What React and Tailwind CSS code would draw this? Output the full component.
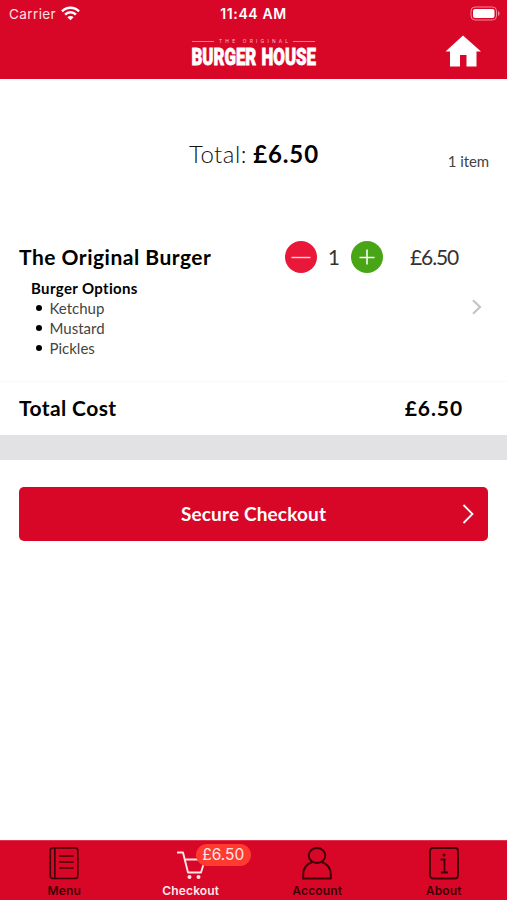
import React from 'react';

const options = ['Ketchup', 'Mustard', 'Pickles'];

const StatusBar = () => (
  <div className="grid h-[27px] grid-cols-3 items-center pl-[9px] pr-[7px] font-['Inter',sans-serif] text-[13.5px] text-white">
    <div className="flex items-center gap-[5px]">
      <span className="pt-px tracking-[0.4px] text-[#ffe0e4]">Carrier</span>
      <svg width="19" height="15" viewBox="0 0 19 15" fill="none" stroke="currentColor" strokeWidth="2.5">
        <path d="M1 5.3a12.1 12.1 0 0 1 17 0" />
        <path d="M4.1 8.6a7.6 7.6 0 0 1 10.8 0" />
        <path d="M9.5 14.3 6.4 11.2a4.4 4.4 0 0 1 6.2 0z" fill="currentColor" stroke="none" />
      </svg>
    </div>
    <span className="-ml-[2px] text-center text-[14px] font-semibold tracking-[0.6px]">11:44 AM</span>
    <svg className="justify-self-end" width="30" height="15" viewBox="0 0 30 15">
      <rect x="1" y="1" width="25.5" height="13" rx="4" fill="none" stroke="#f0899a" />
      <rect x="3" y="3" width="21.5" height="9" rx="2" fill="#fff" />
      <path d="M28 5v5c1-.4 1.6-1.4 1.6-2.5S29 5.4 28 5z" fill="#f0899a" />
    </svg>
  </div>
);

const Logo = () => (
  <svg className="overflow-visible" width="126" height="36" viewBox="0 0 126 36" fill="#fff">
    <path d="M1 3.5h22M102 3.5h22" stroke="#f08c9b" strokeWidth="0.9" />
    <text x="28" y="5.3" fontSize="4.8" textLength="69" lengthAdjust="spacing" fontFamily="Inter, sans-serif" fill="#ffc4cc">THE ORIGINAL</text>
    <text x="0.5" y="26.8" fontSize="23.5" fontWeight="900" stroke="#fff" strokeWidth="0.8" wordSpacing="1.5" textLength="124.5" lengthAdjust="spacingAndGlyphs" fontFamily="Roboto, sans-serif">BURGER HOUSE</text>
  </svg>
);

const Header = () => (
  <header className="h-[79px] bg-[#d80727]">
    <StatusBar />
    <div className="grid h-[52px] grid-cols-3 items-start">
      <span />
      <div className="flex justify-center pt-[11px]">
        <Logo />
      </div>
      <svg className="mr-[26px] mt-[8px] justify-self-end" width="36" height="32" viewBox="0 0 36 32" fill="#fff">
        <path d="M18 0.5 36 16.5h-4.5V31.5H21.5V20h-6.5V31.5H5V16.5H0.5z" />
      </svg>
    </div>
  </header>
);

const ItemRow = () => (
  <section className="h-[185px] border-b border-[#f9f9f9] pl-[19px] pt-[44px]">
    <div className="flex h-8 items-center">
      <h2 className="w-[266px] text-[21px] font-bold tracking-[0.5px]">The Original Burger</h2>
      <button className="flex h-8 w-8 items-center justify-center rounded-full bg-[#e91838]">
        <svg width="20" height="20" viewBox="0 0 20 20" stroke="#ffd5da" strokeWidth="1.4">
          <path d="M0.5 10.5h19" />
        </svg>
      </button>
      <span className="w-[34px] pt-px text-center text-[20.5px] text-[#333]">1</span>
      <button className="flex h-8 w-8 items-center justify-center rounded-full bg-[#48a516]">
        <svg width="16" height="16" viewBox="0 0 16 16" stroke="#fff" strokeWidth="1.5">
          <path d="M0.5 8.5h15M8 0.5v15" />
        </svg>
      </button>
      <span className="ml-[27px] text-[21px] tracking-[-1.1px] text-[#333]">£6.50</span>
    </div>
    <div className="flex justify-between pl-[12px] pr-[25px]">
      <div className="pt-[5px] text-[15px] leading-5">
        <h3 className="font-bold tracking-[0.35px]">Burger Options</h3>
        <ul>
          {options.map((option) => (
            <li key={option} className="flex items-center pl-[5px] text-[#444]">
              <span className="mr-[8px] h-[5.5px] w-[5.5px] rounded-full bg-black" />
              {option}
            </li>
          ))}
        </ul>
      </div>
      <svg className="mt-[26px]" width="10" height="16" viewBox="0 0 10 16" fill="none" stroke="#c4c4c6" strokeWidth="2.2">
        <path d="M1 1.3 8 8 1 14.7" />
      </svg>
    </div>
  </section>
);

const tabs = [
  {
    label: 'Menu',
    icon: (
      <svg width="30" height="33" viewBox="0 0 30 33" fill="none" stroke="currentColor" strokeWidth="1.6">
        <rect x="1.3" y="1" width="27.5" height="30.5" rx="2.5" />
        <path d="M5.8 1v30.5M10 9h14.5M10 15h14.5M10 21h14.5" />
      </svg>
    ),
  },
  {
    label: 'Checkout',
    active: true,
    badge: '£6.50',
    icon: (
      <svg width="30" height="33" viewBox="0 0 30 33" fill="none" stroke="currentColor" strokeWidth="1.9">
        <path d="M1 5.5H7L12 25.5H25L29 12.5H9" strokeLinejoin="round" />
        <circle cx="13.5" cy="30" r="2" fill="currentColor" stroke="none" />
        <circle cx="22.5" cy="30" r="2" fill="currentColor" stroke="none" />
      </svg>
    ),
  },
  {
    label: 'Account',
    icon: (
      <svg width="30" height="33" viewBox="0 0 30 33" fill="none" stroke="currentColor" strokeWidth="1.9">
        <ellipse cx="15" cy="8.5" rx="8.3" ry="7.5" />
        <path d="M10.5 15C4.5 17 1.2 22 1.2 27.5V31.5H28.8V27.5C28.8 22 25.5 17 19.5 15" />
      </svg>
    ),
  },
  {
    label: 'About',
    icon: (
      <svg width="30" height="33" viewBox="0 0 30 33" fill="none" stroke="currentColor" strokeWidth="1.8">
        <rect x="1" y="1" width="28" height="30.5" rx="3" />
        <path d="M11.5 12.5H15.5V25.5M12 25.5H19" />
        <circle cx="15" cy="8" r="1.5" fill="currentColor" stroke="none" />
      </svg>
    ),
  },
];

const TabBar = () => (
  <nav className="grid h-[60px] grid-cols-4 border-t border-[#e2344c] bg-[#d80727] pl-px font-['Inter',sans-serif]">
    {tabs.map(({ label, icon, active, badge }) => (
      <div key={label} className={`flex flex-col items-center pt-[6px] ${active ? 'text-[#ffe5e8]' : 'text-[#3f0008]'}`}>
        <div className="relative">
          {icon}
          {badge && (
            <span className="absolute -top-[3px] left-[20px] flex h-[22px] w-[55px] items-center justify-center rounded-full bg-[#ff3b30] text-[15.5px]">
              {badge}
            </span>
          )}
        </div>
        <span className="mt-[3px] text-[12px] font-semibold leading-4 tracking-[0.15px]">{label}</span>
      </div>
    ))}
  </nav>
);

const App = () => {
  return (
    <div className="flex h-[900px] w-[507px] flex-col overflow-hidden bg-white font-['Lato',sans-serif] text-black">
      <Header />
      <section className="grid h-[118px] grid-cols-[1fr_auto_1fr] pr-[18px] pt-[58px]">
        <span />
        <p className="pl-[19px] text-[24px] leading-[34px] text-[#111]">
          <span className="font-light tracking-[0.5px]">Total:</span> <strong className="font-bold tracking-[0.9px] text-black">£6.50</strong>
        </p>
        <span className="pt-[14px] text-right text-[15px] leading-5 tracking-[-0.1px] text-[#444]">1 item</span>
      </section>
      <ItemRow />
      <section className="flex h-[53px] items-center justify-between pb-[2px] pl-[19px] pr-[44px] text-[21px] font-bold">
        <span className="tracking-[0.4px]">Total Cost</span>
        <span className="tracking-[0.9px]">£6.50</span>
      </section>
      <div className="h-[25px] bg-[#e2e2e4]" />
      <main className="flex-1 px-[19px] pt-[27px]">
        <button className="grid h-[54px] w-full grid-cols-[1fr_auto_1fr] items-center rounded-[5px] bg-[#d80727] pr-[14px] text-white">
          <span />
          <span className="pl-[14px] text-[19px] font-bold tracking-[0.15px]">Secure Checkout</span>
          <svg className="justify-self-end" width="12" height="20" viewBox="0 0 12 20" fill="none" stroke="#fff" strokeWidth="1.8">
            <path d="M1.5 1 10.5 10 1.5 19" />
          </svg>
        </button>
      </main>
      <TabBar />
    </div>
  );
};

export default App;
